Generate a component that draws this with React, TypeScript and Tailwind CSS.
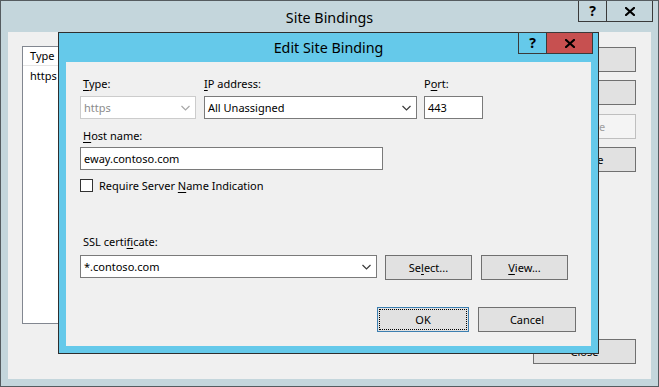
import type { ReactNode } from 'react';
import clsx from 'clsx';

// Two stacked Windows 8 style dialogs: "Site Bindings" behind, "Edit Site Binding" on top.

function Chevron({ muted }: { muted?: boolean }) {
  return (
    <svg width="9" height="6" viewBox="0 0 9 6" className="shrink-0">
      <polyline points="0.5,1 4.5,5 8.5,1" fill="none" stroke={muted ? '#a8a8a8' : '#3a3a3a'} strokeWidth="1.2" />
    </svg>
  );
}

function CloseGlyph() {
  return (
    <svg width="10" height="9" viewBox="0 0 10 9">
      <path d="M1 1 L9 8 M9 1 L1 8" stroke="#000" strokeWidth="2.2" strokeLinecap="square" />
    </svg>
  );
}

function CaptionButtons({ red, className }: { red?: boolean; className: string }) {
  return (
    <div className={clsx('absolute flex h-[22px]', className)}>
      <div className="flex w-[29px] items-center justify-center border border-[#3a3a3a] text-[14px] font-bold leading-none text-black">
        ?
      </div>
      <div
        className={clsx(
          'flex w-[46px] items-center justify-center border border-l-0 border-[#3a3a3a]',
          red && 'bg-[#c75050]'
        )}
      >
        <CloseGlyph />
      </div>
    </div>
  );
}

function Key({ children }: { children: ReactNode }) {
  return <span className="underline underline-offset-[2px]">{children}</span>;
}

function Label({ children, className }: { children: ReactNode; className?: string }) {
  return <div className={clsx('h-[16px] leading-[16px] text-black', className)}>{children}</div>;
}

function Combo({ value, className, disabled }: { value: string; className: string; disabled?: boolean }) {
  return (
    <div
      className={clsx(
        'flex h-[23px] items-center justify-between border bg-white pl-[3px] pr-[5px]',
        disabled ? 'border-[#cccccc] text-[#8c8c8c]' : 'border-[#7a7a7a] text-black',
        className
      )}
    >
      <span className="leading-[16px]">{value}</span>
      <Chevron muted={disabled} />
    </div>
  );
}

function TextBox({ value, className }: { value: string; className: string }) {
  return (
    <div className={clsx('flex h-[23px] items-center border border-[#7a7a7a] bg-white pl-[3px] text-black', className)}>
      <span className="leading-[16px]">{value}</span>
    </div>
  );
}

function Button({ children, className, disabled, focused }: { children: ReactNode; className: string; disabled?: boolean; focused?: boolean }) {
  return (
    <div
      className={clsx(
        'relative flex h-[25px] items-center justify-center border leading-[16px]',
        disabled
          ? 'border-[#bfbfbf] bg-[#f4f4f4] text-[#a0a0a0]'
          : focused
            ? 'border-[#3c7fb1] bg-[#e1e1e1] text-black'
            : 'border-[#707070] bg-[#e1e1e1] text-black',
        className
      )}
    >
      {focused && <div className="absolute inset-[1px] border border-dotted border-black" />}
      {children}
    </div>
  );
}

function EditSiteBinding() {
  return (
    <div className="absolute left-[57px] top-[31px] h-[322px] w-[541px] border border-[#2e2e2e] bg-[#65c9ea]">
      <div className="relative h-[29px]">
        <p className="pt-[5px] text-center text-[14.3px] leading-[20px] text-black">Edit Site Binding</p>
        <CaptionButtons red className="right-[5px] top-[-1px]" />
      </div>

      <div className="mx-[7px] h-[284px] bg-[#f0f0f0] pl-[14px] pt-[14px]">
        <div className="flex items-start">
          <div className="w-[116px]">
            <Label className="pl-[3px]">
              <Key>T</Key>ype:
            </Label>
            <Combo disabled value="https" className="mt-[4px] w-[116px]" />
          </div>
          <div className="ml-[8px] w-[213px]">
            <Label>
              <Key>I</Key>P address:
            </Label>
            <Combo value="All Unassigned" className="mt-[4px] w-[213px]" />
          </div>
          <div className="ml-[7px] w-[59px]">
            <Label>
              P<Key>o</Key>rt:
            </Label>
            <TextBox value="443" className="mt-[4px] w-[59px]" />
          </div>
        </div>

        <Label className="mt-[9px] pl-[3px]">
          <Key>H</Key>ost name:
        </Label>
        <TextBox value="eway.contoso.com" className="mt-[3px] w-[303px]" />

        <div className="mt-[9px] flex h-[13px] items-center">
          <div className="h-[13px] w-[13px] border border-[#333333] bg-white" />
          <span className="ml-[6px] leading-[16px] text-black">
            Require Server <Key>N</Key>ame Indication
          </span>
        </div>

        <Label className="mt-[42px] pl-[3px]">
          SSL certi<Key>f</Key>icate:
        </Label>
        <div className="mt-[5px] flex items-start">
          <Combo value="*.contoso.com" className="w-[297px]" />
          <Button className="ml-[8px] w-[87px]">
            Se<Key>l</Key>ect...
          </Button>
          <Button className="ml-[9px] w-[87px]">
            <Key>V</Key>iew...
          </Button>
        </div>

        <div className="mt-[27px] flex justify-end pr-[15px]">
          <Button focused className="w-[92px]">
            OK
          </Button>
          <Button className="ml-[9px] w-[98px]">Cancel</Button>
        </div>
      </div>
    </div>
  );
}

export default function App() {
  return (
    <div className="relative h-[387px] w-[659px] overflow-hidden border border-[#555c60] bg-[#c4d6dc] font-['Noto_Sans',sans-serif] text-[11px]">
      <div className="relative h-[31px]">
        <p className="pt-[7px] text-center text-[14.3px] leading-[20px] text-black">Site Bindings</p>
        <CaptionButtons className="right-[5px] top-[-1px]" />
      </div>

      <div className="mx-[7px] flex h-[347px] bg-[#f0f0f0] pl-[14px] pr-[15px] pt-[14px]">
        <div className="h-[278px] w-[497px] border border-[#828790] bg-white">
          <div className="h-[19px] border-b border-[#e5e5e5] pl-[7px] leading-[18px] text-black">Type</div>
          <div className="pl-[7px] pt-[1px] leading-[18px] text-black">https</div>
        </div>

        <div className="ml-auto flex w-[103px] flex-col pt-[1px]">
          <Button className="w-[103px]">Add...</Button>
          <Button className="mt-[8px] w-[103px]">Edit...</Button>
          <Button disabled className="mt-[9px] w-[103px]">
            Remove
          </Button>
          <Button className="mt-[8px] w-[103px]">Browse</Button>
          <Button className="mt-[167px] w-[103px]">Close</Button>
        </div>
      </div>

      <EditSiteBinding />
    </div>
  );
}
